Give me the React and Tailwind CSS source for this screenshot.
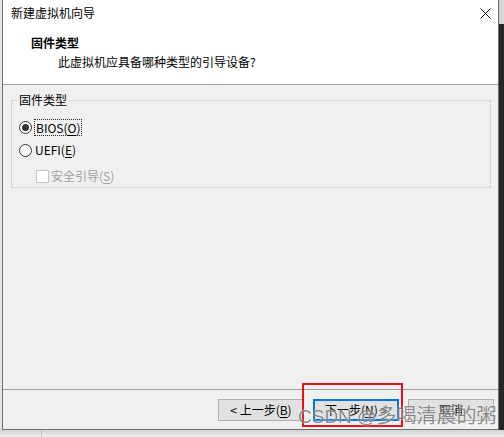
import React from 'react';

const Radio = ({ checked }) => (
  <span className="w-[13px] h-[13px] rounded-full border border-[#333] bg-white flex items-center justify-center shrink-0">
    {checked && <span className="w-[7px] h-[7px] rounded-full bg-[#333]" />}
  </span>
);

const Button = ({ children, primary }) => (
  <div
    className={`w-[86px] h-[22px] flex items-center justify-center bg-[#e1e1e1] ${
      primary ? 'border-2 border-[#0078d7]' : 'border border-[#adadad]'
    }`}
  >
    {children}
  </div>
);

const App = () => {
  return (
    <div className="w-[504px] h-[437px] bg-[#f0f0f0] flex flex-col overflow-hidden relative text-[12px] text-black font-['Noto_Sans_CJK_SC','Noto_Sans',sans-serif]">
      <div className="flex h-[430px]">
        <div className="w-[2px] bg-[#e4e4e4]" />
        <div className="w-[497px] border-x border-b border-[#707070] flex flex-col">
          {/* header */}
          <div className="h-[85px] bg-white border-b border-[#a0a0a0] flex flex-col">
            <div className="h-[26px] flex items-center justify-between pl-[8px] pr-[7px]">
              <span className="leading-[16px]">新建虚拟机向导</span>
              <svg width="11" height="11" viewBox="0 0 11 11">
                <path d="M0.5 0.5 L10.5 10.5 M10.5 0.5 L0.5 10.5" stroke="#111" strokeWidth="1" />
              </svg>
            </div>
            <div className="pl-[28px] mt-[8px] font-bold leading-[18px]">固件类型</div>
            <div className="pl-[55px] mt-[1px] leading-[18px]">此虚拟机应具备哪种类型的引导设备?</div>
          </div>

          {/* body */}
          <div className="h-[305px] bg-[#f0f0f0] border-b border-[#a0a0a0] px-[8px] pt-[7px]">
            <fieldset className="w-[480px] h-[96px] border border-[#d5d5d5]">
              <legend className="ml-[5px] px-[2px] leading-[16px]">固件类型</legend>
              <div className="mt-[10px] h-[18px] flex items-center pl-[7px] gap-[2px]">
                <Radio checked />
                <span className="border border-dotted border-[#222] px-[1px] leading-[15px]">
                  BIOS(<u className="underline-offset-2">O</u>)
                </span>
              </div>
              <div className="mt-[5px] h-[18px] flex items-center pl-[7px] gap-[3px]">
                <Radio />
                <span className="leading-[16px]">
                  UEFI(<u className="underline-offset-2">E</u>)
                </span>
              </div>
              <div className="mt-[8px] h-[18px] flex items-center pl-[24px] gap-[2px] text-[#a0a0a0]">
                <span className="w-[13px] h-[13px] border border-[#c4c4c4] bg-white shrink-0" />
                <span className="leading-[16px]">
                  安全引导(<u className="underline-offset-2">S</u>)
                </span>
              </div>
            </fieldset>
          </div>

          {/* footer */}
          <div className="h-[39px] flex items-start justify-end pt-[9px] pr-[4px] gap-[9px]">
            <Button>&lt; 上一步(<u className="underline-offset-2">B</u>)</Button>
            <Button primary>下一步(<u className="underline-offset-2">N</u>) &gt;</Button>
            <Button>取消</Button>
          </div>
        </div>
        <div className="flex-1 flex flex-col">
          <div className="h-[24px] bg-[#d9d9d9] border-l border-[#c8c8c8]" />
          <div className="flex-1 bg-[#262626]" />
        </div>
      </div>
      <div className="flex-1 bg-gradient-to-b from-[#d2d2d2] to-[#f0f0f0]">
        <div className="ml-[41px] w-px h-full bg-[#b7c3d3]" />
      </div>

      {/* annotation overlays */}
      <div className="absolute left-[302px] top-[383px] w-[101px] h-[44px] border-2 border-[#e3131c]" />
      <div className="absolute left-[298px] top-[402px] text-[20px] leading-[26px] whitespace-nowrap text-[rgba(90,90,90,0.7)] [text-shadow:0_0_2px_rgba(255,255,255,0.9)]">
        <span className="font-['Liberation_Sans',sans-serif] text-[19px]">CSDN @</span>多喝清晨的粥
      </div>
    </div>
  );
};

export default App;
